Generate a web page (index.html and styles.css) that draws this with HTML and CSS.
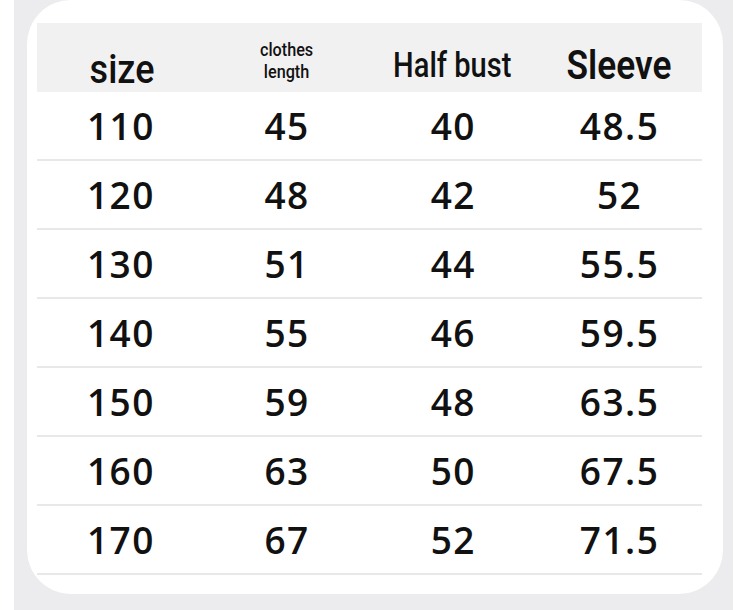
FILE: index.html
```html
<!DOCTYPE html>
<html>
<head>
<meta charset="utf-8">
<link rel="stylesheet" href="styles.css">
</head>
<body>
<div class="frame">
  <div class="card">
    <div class="table">
      <div class="head">
        <div class="hc"><span class="h-size">size</span></div>
        <div class="hc"><span class="h-len">clothes<br>length</span></div>
        <div class="hc"><span class="h-bust">Half bust</span></div>
        <div class="hc"><span class="h-sleeve">Sleeve</span></div>
      </div>
      <div class="row"><div>110</div><div>45</div><div>40</div><div>48.5</div></div>
      <div class="row"><div>120</div><div>48</div><div>42</div><div>52</div></div>
      <div class="row"><div>130</div><div>51</div><div>44</div><div>55.5</div></div>
      <div class="row"><div>140</div><div>55</div><div>46</div><div>59.5</div></div>
      <div class="row"><div>150</div><div>59</div><div>48</div><div>63.5</div></div>
      <div class="row"><div>160</div><div>63</div><div>50</div><div>67.5</div></div>
      <div class="row"><div>170</div><div>67</div><div>52</div><div>71.5</div></div>
    </div>
  </div>
</div>
</body>
</html>
```
FILE: styles.css
```css
html, body {
  margin: 0;
  padding: 0;
  background: #ffffff;
  width: 750px;
  height: 610px;
  overflow: hidden;
}
.frame {
  margin-left: 14px;
  width: 719px;
  height: 610px;
  background: #ececee;
  overflow: hidden;
}
.card {
  margin-left: 13px;
  width: 696px;
  height: 594px;
  background: #ffffff;
  border-radius: 44px;
  padding-top: 23px;
  box-sizing: border-box;
}
.table {
  margin-left: 10px;
  width: 665px;
}
.head {
  display: grid;
  grid-template-columns: repeat(4, 1fr);
  height: 69px;
  background: #f1f1f1;
  color: #111;
  font-family: Roboto, "Noto Sans", sans-serif;
}
.hc {
  display: flex;
  align-items: flex-end;
  justify-content: center;
}
.h-size {
  font-size: 40px;
  font-weight: 500;
  line-height: 1;
  margin-bottom: 2px;
  display: inline-block;
  transform: scaleX(0.9);
  margin-left: 3px;
}
.h-len {
  font-size: 18px;
  font-weight: 500;
  line-height: 22px;
  text-align: center;
  margin-bottom: 9px;
  display: inline-block;
  transform: scaleX(0.9);
}
.h-bust {
  font-size: 35px;
  font-weight: 500;
  line-height: 1;
  margin-bottom: 9px;
  display: inline-block;
  transform: scaleX(0.83);
  white-space: nowrap;
}
.h-sleeve {
  font-size: 41px;
  font-weight: 600;
  line-height: 1;
  margin-bottom: 6px;
  display: inline-block;
  transform: scaleX(0.86);
}
.row {
  display: grid;
  grid-template-columns: repeat(4, 1fr);
  height: 69px;
  box-sizing: border-box;
  border-bottom: 2px solid #e8e8e8;
  align-items: center;
  font-family: "Open Sans", "Noto Sans", sans-serif;
  font-size: 37px;
  font-weight: 600;
  letter-spacing: 1.5px;
  color: #111;
  text-align: center;
}
.row div {
  line-height: 1;
  padding-left: 1.5px;
}
```
